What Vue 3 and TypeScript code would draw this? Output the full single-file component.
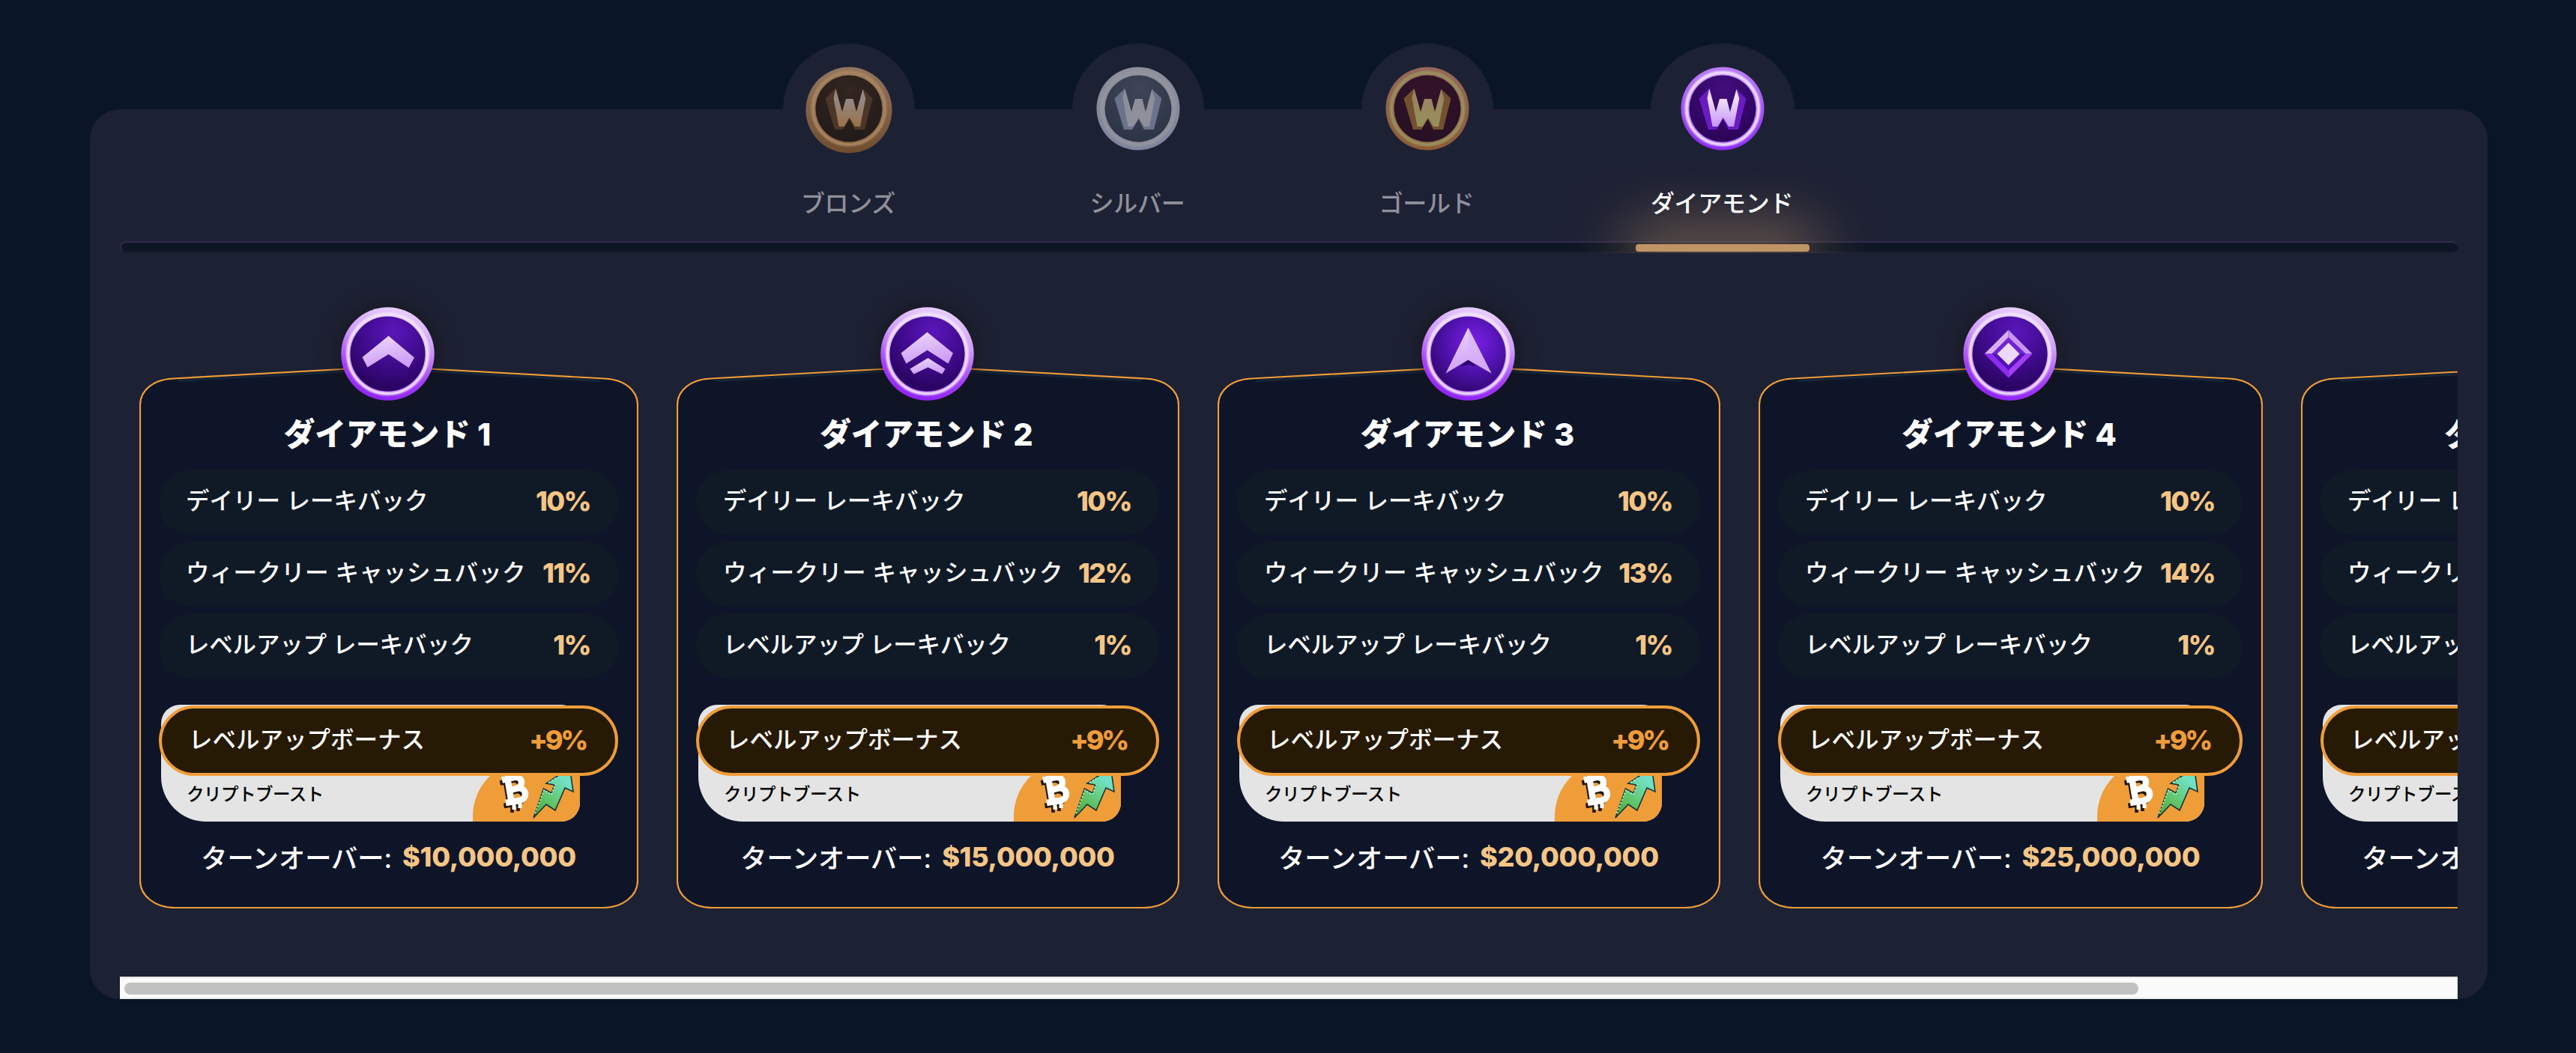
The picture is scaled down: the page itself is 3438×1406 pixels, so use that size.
<script setup lang="ts">
interface Tier {
  name: string
  r: number
  rim: [string, string]
  shine: string
  disk: [string, string]
  face: [string, string]
  side: string
  active?: boolean
}

interface Level {
  title: string
  width: number
  weekly: string
  turnover: string
  icon: 'single' | 'double' | 'arrow' | 'gem'
}

const tiers: Tier[] = [
  { name: 'ブロンズ', r: 57.5, rim: ['#94775f', '#6f4c2e'], shine: '#a98560', disk: ['#33251f', '#221b1b'], face: ['#958783', '#9a7148'], side: '#4c3627' },
  { name: 'シルバー', r: 55.5, rim: ['#8e909c', '#7f849e'], shine: '#93949d', disk: ['#3d4557', '#2d3446'], face: ['#8c8e99', '#90919b'], side: '#6b728c' },
  { name: 'ゴールド', r: 55.5, rim: ['#95675c', '#8d5b35'], shine: '#99905f', disk: ['#331329', '#271025'], face: ['#988560', '#979058'], side: '#73502f' },
  { name: 'ダイアモンド', r: 55.5, rim: ['#bb7dfa', '#8d2cf0'], shine: '#f0dfff', disk: ['#420d7c', '#2b0458'], face: ['#efdcfd', '#c795f5'], side: '#6a1bc2', active: true },
]

const levels: Level[] = [
  { title: 'ダイアモンド 1', width: 666, weekly: '11%', turnover: '$10,000,000', icon: 'single' },
  { title: 'ダイアモンド 2', width: 671, weekly: '12%', turnover: '$15,000,000', icon: 'double' },
  { title: 'ダイアモンド 3', width: 671, weekly: '13%', turnover: '$20,000,000', icon: 'arrow' },
  { title: 'ダイアモンド 4', width: 673, weekly: '14%', turnover: '$25,000,000', icon: 'gem' },
  { title: 'ダイアモンド 5', width: 672, weekly: '15%', turnover: '$30,000,000', icon: 'gem' },
]

const rowsOf = (l: Level) => [
  { kind: 'daily', label: 'デイリー レーキバック', value: '10%' },
  { kind: 'weekly', label: 'ウィークリー キャッシュバック', value: l.weekly },
  { kind: 'levelup', label: 'レベルアップ レーキバック', value: '1%' },
]

// Card outline: rounded box whose top edge rises to a peak in the middle.
function outline(w: number): string {
  const r = w - 1
  return `M1 53 C1 33 19 18.5 45 17.5 L${w / 2} 1.5 L${w - 45} 17.5 C${w - 19} 18.5 ${r} 33 ${r} 53 V688 C${r} 708 ${w - 21} 724 ${w - 47} 724 H47 C21 724 1 708 1 688 Z`
}
</script>

<template>
  <div class="page">
    <section class="panel">
      <nav class="tabs">
        <div class="tab-list">
          <div v-for="(t, i) in tiers" :key="t.name" class="tab" :class="{ active: t.active }">
            <div class="bump">
              <svg class="coin" width="120" height="120" viewBox="-60 -60 120 120">
                <defs>
                  <linearGradient :id="'rim' + i" x1="0" y1="0" x2="0" y2="1">
                    <stop offset="0" :stop-color="t.rim[0]" /><stop offset="1" :stop-color="t.rim[1]" />
                  </linearGradient>
                  <radialGradient :id="'disk' + i" cx="0.5" cy="0.2" r="0.8">
                    <stop offset="0" :stop-color="t.disk[0]" /><stop offset="1" :stop-color="t.disk[1]" />
                  </radialGradient>
                  <linearGradient :id="'face' + i" x1="0" y1="0" x2="0" y2="1">
                    <stop offset="0.3" :stop-color="t.face[0]" /><stop offset="1" :stop-color="t.face[1]" />
                  </linearGradient>
                  <filter :id="'soft' + i"><feGaussianBlur stdDeviation="1" /></filter>
                </defs>
                <circle :cy="t.r - 55.5" :r="t.r" :fill="'url(#rim' + i + ')'" />
                <circle r="48" fill="none" :stroke="t.shine" stroke-width="4.5" :filter="'url(#soft' + i + ')'" />
                <circle r="44.5" :fill="'url(#disk' + i + ')'" />
                <path d="M-17.7-26.7-31.5-13.5-19 28H-8L.7 14 8 28H21L31.5-13.5 18.5-26 10 4.5 0 0-9 4.5Z" :fill="t.side" />
                <path d="M-17.7-26.7-9 4.5-4-13H5.5L10 4.5 18.5-26 22.3-13.5 15 24H8L.7 12-6.5 24H-13.5L-20.5-14Z" :fill="'url(#face' + i + ')'" />
              </svg>
            </div>
            <span class="tab-name">{{ t.name }}</span>
            <i v-if="t.active" class="glow"></i>
          </div>
        </div>
        <div class="track"></div>
      </nav>

      <div class="scroller">
        <div class="cards">
          <article v-for="(l, i) in levels" :key="l.title" class="card" :style="{ width: l.width + 'px' }">
            <svg class="outline" :width="l.width" height="725" :viewBox="`0 0 ${l.width} 725`">
              <path :d="outline(l.width)" fill="#0f1528" />
              <path :d="`M52 20.5 L${l.width / 2} 4.5 L${l.width - 52} 20.5`" fill="none" stroke="#1d3044" stroke-opacity="0.6" stroke-width="3" />
              <path :d="outline(l.width)" fill="none" stroke="#ef9d39" stroke-width="2.2" />
            </svg>
            <div class="medal">
              <svg width="125" height="125" viewBox="-62.5 -62.5 125 125">
                <defs>
                  <linearGradient :id="'ring' + i" x1="0.62" y1="0" x2="0.38" y2="1">
                    <stop offset="0" stop-color="#e9d0fd" /><stop offset="0.35" stop-color="#cf9bfa" />
                    <stop offset="0.7" stop-color="#a53ff8" /><stop offset="1" stop-color="#8f22f2" />
                  </linearGradient>
                  <radialGradient :id="'core' + i" cx="0.58" :cy="l.icon === 'arrow' ? 0.35 : 0.2" r="0.75">
                    <stop offset="0" :stop-color="l.icon === 'arrow' ? '#7a20e8' : '#5a16ba'" />
                    <stop offset="0.5" :stop-color="l.icon === 'arrow' ? '#5012ae' : '#430c93'" />
                    <stop offset="1" stop-color="#2a0463" />
                  </radialGradient>
                  <linearGradient :id="'glyph' + i" x1="0" y1="0" x2="0.3" y2="1">
                    <stop offset="0" stop-color="#eddafd" /><stop offset="1" stop-color="#cf9ef6" />
                  </linearGradient>
                  <filter :id="'edge' + i"><feGaussianBlur stdDeviation="1" /></filter>
                </defs>
                <circle r="62.2" :fill="'url(#ring' + i + ')'" />
                <circle r="53" fill="none" stroke="#f1e2ff" stroke-width="4.5" :filter="'url(#edge' + i + ')'" />
                <circle r="50" :fill="'url(#core' + i + ')'" />
                <path v-if="l.icon === 'single'" d="M1-24 35.5 5 28 18.5 1 .5-27 18-34 4.5Z" :fill="'url(#glyph' + i + ')'" />
                <g v-else-if="l.icon === 'double'" :fill="'url(#glyph' + i + ')'">
                  <path d="M0-29 34.5-1 28 13 0-5-28 13-35-1Z" />
                  <path d="M1 5.5 24 20 20 27 1 18-18 27-23 20Z" />
                </g>
                <g v-else-if="l.icon === 'arrow'">
                  <path d="M0 7 11 17 0 14-11 17Z" fill="#2b0668" />
                  <path d="M0-35 31 26 0 8-30 26Z" :fill="'url(#glyph' + i + ')'" />
                  <path d="M0-35 31 26 0 8Z" fill="#d9b2f8" fill-opacity="0.5" />
                </g>
                <g v-else>
                  <path d="M-2-32V0H-34Z" fill="#d9adfb" /><path d="M-2-32 30 0H-2Z" fill="#ca93f8" />
                  <path d="M-34 0H-2V32Z" fill="#8b2cf0" /><path d="M30 0H-2V32Z" fill="#a23ff4" />
                  <path d="M-2-22 21 0-2 22-24 0Z" fill="#5512b6" />
                  <path d="M-2-22 21 0H14L-2-16-17 0H-24Z" fill="#7224d8" />
                  <path d="M-2-15 13 0-2 15-17 0Z" fill="#ecdafc" />
                </g>
              </svg>
            </div>
            <h3 class="title">{{ l.title }}</h3>
            <div class="rows">
              <div v-for="row in rowsOf(l)" :key="row.kind" class="row">
                <span class="label" :class="row.kind">{{ row.label }}</span>
                <b class="value">{{ row.value }}</b>
              </div>
            </div>
            <div class="bonus">
              <div class="bonus-pill">
                <span class="label">レベルアップボーナス</span>
                <b class="value">+9%</b>
              </div>
              <div class="boost">
                <span class="boost-name">クリプトブースト</span>
                <div class="boost-art">
                  <svg width="143" height="82" viewBox="0 0 143 82">
                    <defs>
                      <linearGradient :id="'up' + i" x1="0.8" y1="0" x2="0.2" y2="1">
                        <stop offset="0.2" stop-color="#72e0c4" /><stop offset="0.7" stop-color="#5fc262" /><stop offset="1" stop-color="#4aa83f" />
                      </linearGradient>
                    </defs>
                    <g fill="none" stroke-linejoin="round">
                      <g stroke="#1d1304" transform="translate(-2.5 4)">
                        <path stroke-width="6.5" d="M39 26.5 55 23C67 21.5 68 34 59 37.5 72 36 74 51 62 54L44 57M46.5 25.5 51.5 55.5M50 40 60 37.5" />
                        <path stroke-width="4.5" d="M46 17V26M56 16V24M55 56V66M63 54V64" />
                      </g>
                      <g stroke="#fff">
                        <path stroke-width="8.5" d="M39 26.5 55 23C67 21.5 68 34 59 37.5 72 36 74 51 62 54L44 57M46.5 25.5 51.5 55.5M50 40 60 37.5" />
                        <path stroke-width="5" d="M46 17V26M56 16V24M55 56V66M63 54V64" />
                      </g>
                    </g>
                    <path d="M81 77 94.5 38 105 44 109 33 98 31 129.5 10 134 42 123 37 110 67 98 59Z" :fill="'url(#up' + i + ')'" stroke="#15333a" stroke-width="1.6" />
                    <path d="M83 71 95 40 105 46 110 32M101 30 112 23" fill="none" stroke="#b5f5c0" stroke-width="1.6" stroke-dasharray="2.5 2" />
                  </svg>
                </div>
              </div>
            </div>
            <p class="turnover"><span>ターンオーバー:</span><b>{{ l.turnover }}</b></p>
          </article>
        </div>
      </div>
      <div class="scrollbar"><div class="thumb"></div></div>
    </section>
  </div>
</template>

<style>
body {
  margin: 0;
  background: #0a1626;
}
</style>

<style scoped>
.page {
  box-sizing: border-box;
  height: 1406px;
  padding: 146px 118px 0 120px;
  overflow: hidden;
  background: #0a1626;
  color: #fff;
  font-family: Inter, "Noto Sans CJK JP", sans-serif;
}
.panel {
  box-sizing: border-box;
  height: 1188px;
  padding: 0 40px;
  border-radius: 40px;
  background: #1d2134;
}
.panel::before {
  content: "";
  display: table;
}
.tabs {
  margin-top: -88px;
  height: 280px;
  overflow: hidden;
}
.tab-list {
  display: flex;
  justify-content: center;
  gap: 210px;
  height: 264px;
}
.tab {
  position: relative;
  min-width: 176px;
  display: flex;
  flex-direction: column;
  align-items: center;
  color: #8f909a;
}
.tab.active {
  width: 192px;
  color: #fff;
}
.bump {
  box-sizing: border-box;
  display: flex;
  align-items: center;
  justify-content: center;
  width: 100%;
  height: 176px;
  padding-bottom: 2px;
  border-radius: 50%;
  background: #1d2134;
}
.tab-name {
  position: relative;
  z-index: 3;
  margin: 14px 2px 0 0;
  font-size: 32px;
  font-weight: 500;
  letter-spacing: -0.3px;
  line-height: 48px;
  white-space: nowrap;
}
.glow {
  position: absolute;
  left: 50%;
  top: 268px;
  z-index: 2;
  width: 232px;
  height: 10px;
  margin-left: -116px;
  border-radius: 4px;
  background: #bf9467;
  box-shadow: 0 0 80px 12px rgba(191, 148, 103, 0.95);
}
.track {
  box-sizing: border-box;
  height: 16px;
  border-top: 2px solid #302b49;
  border-left: 2px solid #302b49;
  border-bottom: 2px solid #181c2e;
  border-radius: 8px;
  background: #0e1626;
}
.scroller {
  height: 966px;
  overflow: hidden;
}
.cards {
  display: flex;
  gap: 51px;
  width: max-content;
  padding: 150px 26px 0;
}
.card {
  position: relative;
  box-sizing: border-box;
  flex: none;
  display: flex;
  flex-direction: column;
  height: 725px;
  padding: 0 27px 0 26px;
}
.outline {
  position: absolute;
  left: 0;
  top: 0;
}
.medal {
  position: relative;
  align-self: center;
  width: 125px;
  height: 125px;
  margin: -78px 2px 0 0;
  border-radius: 50%;
  box-shadow: 0 0 28px #17161a;
}
.medal svg {
  display: block;
}
.title {
  position: relative;
  margin: 21px 3px 24px 0;
  font-size: 41.5px;
  font-weight: 800;
  line-height: 48px;
  text-align: center;
  white-space: nowrap;
}
.rows {
  position: relative;
  display: flex;
  flex-direction: column;
  gap: 10px;
}
.row,
.bonus-pill {
  box-sizing: border-box;
  display: flex;
  align-items: center;
  justify-content: space-between;
  height: 86px;
  padding: 0 37px 4px 36px;
  border-radius: 43px;
  background: #101a26;
}
.label {
  font-size: 31.5px;
  font-weight: 500;
  line-height: 48px;
  white-space: nowrap;
}
.label.weekly {
  letter-spacing: 0.3px;
}
.label.levelup {
  letter-spacing: -0.2px;
}
.value {
  color: #f5c585;
  font-size: 36px;
  font-weight: 800;
  letter-spacing: -1.6px;
}
.bonus {
  position: relative;
  height: 156px;
  margin-top: 35px;
}
.bonus-pill {
  position: relative;
  z-index: 1;
  top: 1px;
  height: 94px;
  padding-bottom: 2px;
  padding-right: 39px;
  border: 4px solid #ef9d39;
  border-radius: 47px;
  background: #261a05;
}
.bonus-pill .value {
  color: #ef9d39;
  letter-spacing: -3.3px;
}
.boost {
  position: absolute;
  left: 3px;
  right: 51px;
  top: 0;
  height: 156px;
  display: flex;
  align-items: flex-end;
  justify-content: space-between;
  overflow: hidden;
  border-radius: 25px 25px 25px 60px;
  background: #e4e4e4;
}
.boost-name {
  padding: 0 0 18px 34px;
  color: #000;
  font-size: 23.5px;
  font-weight: 500;
  letter-spacing: -0.5px;
  line-height: 36px;
  white-space: nowrap;
}
.boost-art {
  width: 143px;
  height: 82px;
  border-top-left-radius: 75px;
  background: #ef9d39;
}
.turnover {
  position: relative;
  display: flex;
  justify-content: center;
  align-items: center;
  gap: 14px;
  height: 48px;
  margin: 23px 0 0;
  font-size: 35.2px;
  font-weight: 500;
  white-space: nowrap;
}
.turnover b {
  color: #f5c585;
  font-size: 36px;
  font-weight: 800;
  letter-spacing: -0.3px;
}
.turnover span {
  position: relative;
  top: -1px;
}
.scrollbar {
  box-sizing: border-box;
  height: 30px;
  padding: 6px;
  border-top: 2px solid #e8e8e8;
  border-bottom: 2px solid #ececec;
  background: #fafafa;
}
.thumb {
  width: 2688px;
  height: 16px;
  border-radius: 8px;
  background: #c1c1c1;
}
</style>
